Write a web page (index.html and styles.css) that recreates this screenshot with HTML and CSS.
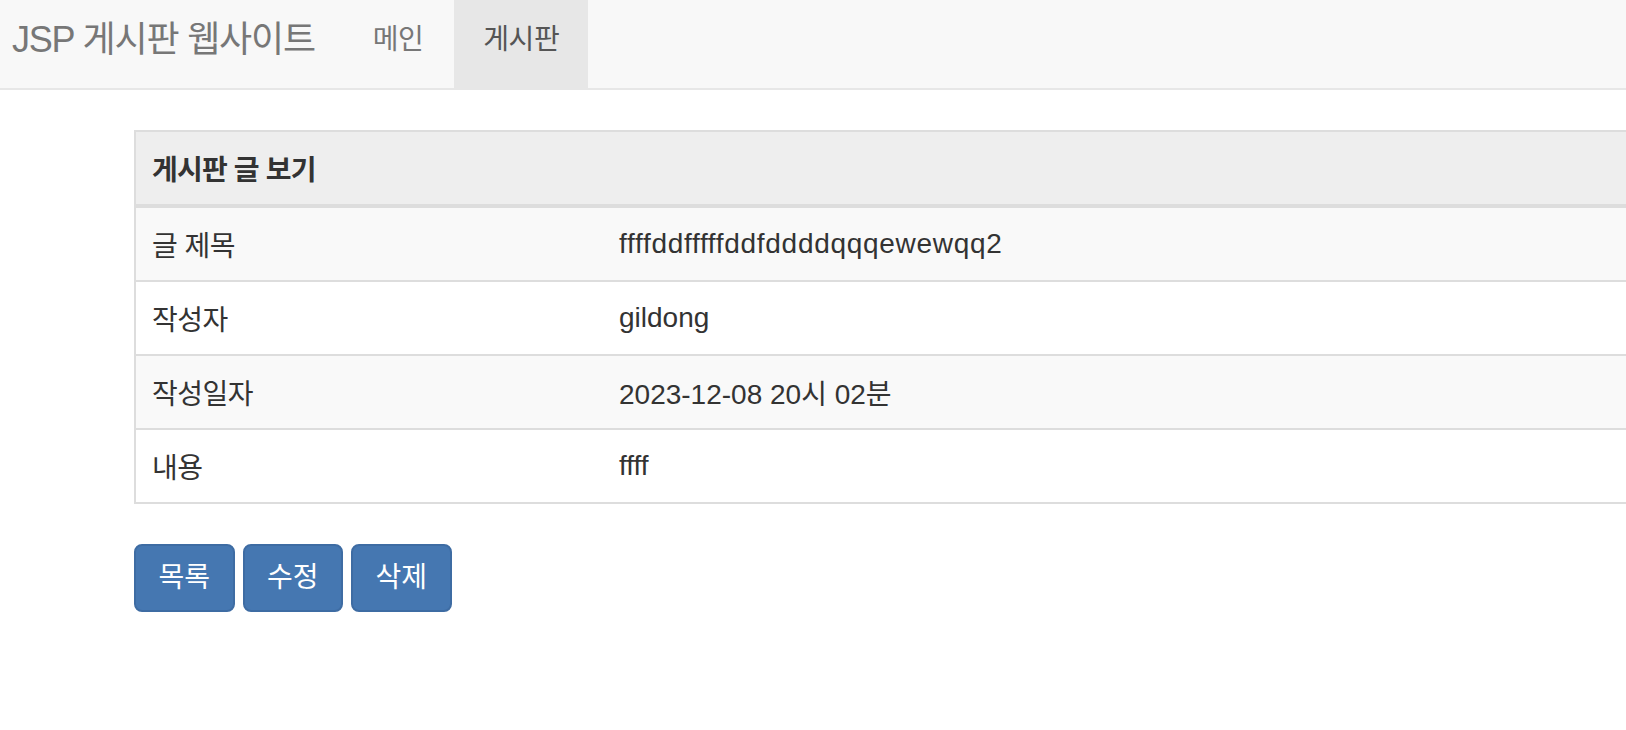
FILE: index.html
```html
<!DOCTYPE html>
<html lang="ko">
<head>
<meta charset="utf-8">
<title>JSP 게시판 웹사이트</title>
<link rel="stylesheet" href="styles.css">
</head>
<body>
<nav class="navbar">
  <a class="brand" href="#">JSP 게시판 웹사이트</a>
  <ul class="nav">
    <li><a href="#">메인</a></li>
    <li class="active"><a href="#">게시판</a></li>
  </ul>
</nav>
<main class="container">
  <div class="table-wrap">
    <table class="view-table">
      <thead>
        <tr><th colspan="2">게시판 글 보기</th></tr>
      </thead>
      <tbody>
        <tr class="odd"><td class="label">글 제목</td><td class="latin">ffffddfffffddfddddqqqewewqq2</td></tr>
        <tr><td class="label">작성자</td><td>gildong</td></tr>
        <tr class="odd"><td class="label">작성일자</td><td>2023-12-08 20시 02분</td></tr>
        <tr><td class="label">내용</td><td>ffff</td></tr>
      </tbody>
    </table>
  </div>
  <div class="actions">
    <a class="btn" href="#">목록</a>
    <a class="btn" href="#">수정</a>
    <a class="btn" href="#">삭제</a>
  </div>
</main>
</body>
</html>
```
FILE: styles.css
```css
html, body {
  margin: 0;
  padding: 0;
  overflow-x: hidden;
  background: #fff;
}
body {
  font-family: "Liberation Sans", "Noto Sans CJK KR", sans-serif;
  color: #333;
}
a { text-decoration: none; }

.navbar {
  display: flex;
  align-items: flex-start;
  height: 88px;
  background: #f8f8f8;
  border-bottom: 2px solid #e7e7e7;
}
.brand {
  display: block;
  height: 88px;
  line-height: 80px;
  padding: 0 29px 0 12px;
  font-size: 36px;
  letter-spacing: -1.2px;
  color: #777;
}
.nav {
  display: flex;
  list-style: none;
  margin: 0;
  padding: 0;
  gap: 2px;
}
.nav a {
  display: block;
  height: 88px;
  line-height: 80px;
  padding: 0 29px;
  font-size: 28px;
  letter-spacing: -0.5px;
  color: #777;
}
.nav .active a {
  background: #e7e7e7;
  color: #555;
}

.container {
  padding: 40px 0 0 134px;
}
.table-wrap {
  overflow: hidden;
}
.view-table {
  width: 1700px;
  border-collapse: separate;
  border-spacing: 0;
  border: 2px solid #ddd;
  border-right: none;
  font-size: 28px;
}
.view-table th {
  height: 72px;
  padding: 0 16px;
  text-align: left;
  font-weight: bold;
  letter-spacing: -0.8px;
  background: #eee;
  border-bottom: 4px solid #ddd;
  vertical-align: middle;
}
.view-table td {
  height: 72px;
  padding: 0 16px;
  vertical-align: middle;
  background: #fff;
}
.view-table td.latin {
  letter-spacing: 0.7px;
}
.view-table tbody tr + tr td {
  border-top: 2px solid #ddd;
}
.view-table tr.odd td {
  background: #f9f9f9;
}
.view-table td.label {
  width: 435px;
  letter-spacing: -0.5px;
}

.actions {
  display: flex;
  gap: 8px;
  margin-top: 40px;
}
.btn {
  display: block;
  height: 64px;
  line-height: 64px;
  padding: 0 22.5px;
  font-size: 28px;
  color: #fff;
  background: #4577b1;
  border: 2px solid #3e6ca3;
  border-radius: 8px;
}
```
